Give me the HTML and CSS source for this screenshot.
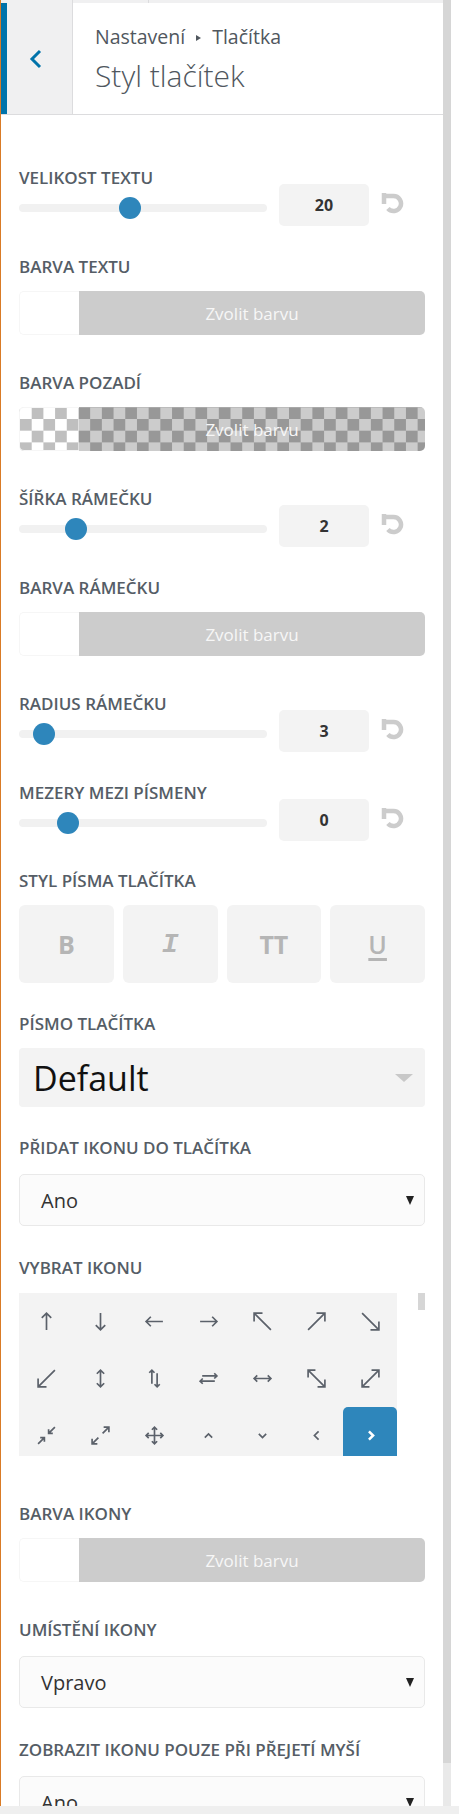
FILE: index.html
```html
<!DOCTYPE html>
<html lang="cs">
<head>
<meta charset="utf-8">
<title>Styl tlačítek</title>
<link rel="stylesheet" href="styles.css">
</head>
<body>
<div class="frame">
  <div class="main">
    <div class="panel">
      <div class="tabs"><span class="tab tab-a"></span><span class="tab tab-b"></span></div>
      <div class="header">
        <div class="back">
          <svg width="14" height="20" viewBox="0 0 14 20"><path d="M11 2 L3 10 L11 18" fill="none" stroke="#0073aa" stroke-width="3"/></svg>
        </div>
        <div class="titles">
          <div class="crumb">Nastavení<span class="crumb-arrow"></span>Tlačítka</div>
          <div class="title">Styl tlačítek</div>
        </div>
      </div>

      <div class="content">
        <div class="control c-slider">
          <div class="label">VELIKOST TEXTU</div>
          <div class="slider-row">
            <div class="track"><span class="thumb" style="left:100px"></span></div>
            <div class="num">20</div>
            <svg class="reset" width="23" height="22" viewBox="0 0 23 22"><path d="M3 1 V12 M1 4 H12.5 A7.5 7.5 0 1 1 6.9 16.5" fill="none" stroke="#cccccc" stroke-width="4.5"/></svg>
          </div>
        </div>

        <div class="control c-picker">
          <div class="label">BARVA TEXTU</div>
          <div class="picker"><span class="swatch"></span><span class="pick-btn">Zvolit barvu</span></div>
        </div>

        <div class="control c-picker">
          <div class="label">BARVA POZADÍ</div>
          <div class="picker checker"><span class="swatch"></span><span class="pick-btn">Zvolit barvu</span></div>
        </div>

        <div class="control c-slider">
          <div class="label">ŠÍŘKA RÁMEČKU</div>
          <div class="slider-row">
            <div class="track"><span class="thumb" style="left:46px"></span></div>
            <div class="num">2</div>
            <svg class="reset" width="23" height="22" viewBox="0 0 23 22"><path d="M3 1 V12 M1 4 H12.5 A7.5 7.5 0 1 1 6.9 16.5" fill="none" stroke="#cccccc" stroke-width="4.5"/></svg>
          </div>
        </div>

        <div class="control c-picker">
          <div class="label">BARVA RÁMEČKU</div>
          <div class="picker"><span class="swatch"></span><span class="pick-btn">Zvolit barvu</span></div>
        </div>

        <div class="control c-slider">
          <div class="label">RADIUS RÁMEČKU</div>
          <div class="slider-row">
            <div class="track"><span class="thumb" style="left:14px"></span></div>
            <div class="num">3</div>
            <svg class="reset" width="23" height="22" viewBox="0 0 23 22"><path d="M3 1 V12 M1 4 H12.5 A7.5 7.5 0 1 1 6.9 16.5" fill="none" stroke="#cccccc" stroke-width="4.5"/></svg>
          </div>
        </div>

        <div class="control c-slider c-tight">
          <div class="label">MEZERY MEZI PÍSMENY</div>
          <div class="slider-row">
            <div class="track"><span class="thumb" style="left:38px"></span></div>
            <div class="num">0</div>
            <svg class="reset" width="23" height="22" viewBox="0 0 23 22"><path d="M3 1 V12 M1 4 H12.5 A7.5 7.5 0 1 1 6.9 16.5" fill="none" stroke="#cccccc" stroke-width="4.5"/></svg>
          </div>
        </div>

        <div class="control">
          <div class="label">STYL PÍSMA TLAČÍTKA</div>
          <div class="styles">
            <div class="sbtn">B</div>
            <div class="sbtn sbtn-i">I</div>
            <div class="sbtn">TT</div>
            <div class="sbtn sbtn-u">U</div>
          </div>
        </div>

        <div class="control">
          <div class="label">PÍSMO TLAČÍTKA</div>
          <div class="fontsel"><span>Default</span><span class="caret-light"></span></div>
        </div>

        <div class="control c-select">
          <div class="label">PŘIDAT IKONU DO TLAČÍTKA</div>
          <div class="select"><span>Ano</span><span class="caret"></span></div>
        </div>

        <div class="control c-icons">
          <div class="label">VYBRAT IKONU</div>
          <div class="iconbox">
            <div class="grid">
              <div class="cell"><svg viewBox="0 0 20 20"><path d="M10 2 V18 M5.5 6.5 L10 2 L14.5 6.5"/></svg></div>
              <div class="cell"><svg viewBox="0 0 20 20"><path d="M10 2 V18 M5.5 13.5 L10 18 L14.5 13.5"/></svg></div>
              <div class="cell"><svg viewBox="0 0 20 20"><path d="M2 10 H18 M6.5 5.5 L2 10 L6.5 14.5"/></svg></div>
              <div class="cell"><svg viewBox="0 0 20 20"><path d="M2 10 H18 M13.5 5.5 L18 10 L13.5 14.5"/></svg></div>
              <div class="cell"><svg viewBox="0 0 20 20"><path d="M2 2 L18 18 M2 10 V2 H10"/></svg></div>
              <div class="cell"><svg viewBox="0 0 20 20"><path d="M2 18 L18 2 M10 2 H18 V10"/></svg></div>
              <div class="cell"><svg viewBox="0 0 20 20"><path d="M2 2 L18 18 M18 10 V18 H10"/></svg></div>

              <div class="cell"><svg viewBox="0 0 20 20"><path d="M18 2 L2 18 M2 10 V18 H10"/></svg></div>
              <div class="cell"><svg viewBox="0 0 20 20"><path d="M10 2 V18 M6.5 5.5 L10 2 L13.5 5.5 M6.5 14.5 L10 18 L13.5 14.5"/></svg></div>
              <div class="cell"><svg viewBox="0 0 20 20"><path d="M7.5 2 V15 M5 4.5 L7.5 2 L10 4.5 M12.5 5 V18 M10 15.5 L12.5 18 L15 15.5"/></svg></div>
              <div class="cell"><svg viewBox="0 0 20 20"><path d="M4 7.5 H18 M15.5 5 L18 7.5 L15.5 10 M16 12.5 H2 M4.5 10 L2 12.5 L4.5 15"/></svg></div>
              <div class="cell"><svg viewBox="0 0 20 20"><path d="M2 10 H18 M5 7 L2 10 L5 13 M15 7 L18 10 L15 13"/></svg></div>
              <div class="cell"><svg viewBox="0 0 20 20"><path d="M2 2 L18 18 M2 9 V2 H9 M18 11 V18 H11"/></svg></div>
              <div class="cell"><svg viewBox="0 0 20 20"><path d="M18 2 L2 18 M11 2 H18 V9 M2 11 V18 H9"/></svg></div>

              <div class="cell"><svg viewBox="0 0 20 20"><path d="M2 18 L8 12 M4 12 H8 V16 M18 2 L12 8 M12 4 V8 H16"/></svg></div>
              <div class="cell"><svg viewBox="0 0 20 20"><path d="M8 12 L2 18 M2 13 V18 H7 M12 8 L18 2 M13 2 H18 V7"/></svg></div>
              <div class="cell"><svg viewBox="0 0 20 20"><path d="M10 2 V18 M2 10 H18 M7.5 4.5 L10 2 L12.5 4.5 M7.5 15.5 L10 18 L12.5 15.5 M4.5 7.5 L2 10 L4.5 12.5 M15.5 7.5 L18 10 L15.5 12.5"/></svg></div>
              <div class="cell"><svg viewBox="0 0 20 20"><path d="M6.5 12 L10 8.5 L13.5 12"/></svg></div>
              <div class="cell"><svg viewBox="0 0 20 20"><path d="M6.5 8.5 L10 12 L13.5 8.5"/></svg></div>
              <div class="cell"><svg viewBox="0 0 20 20"><path d="M12 6 L8 10 L12 14"/></svg></div>
              <div class="cell sel"><svg viewBox="0 0 20 20"><path d="M8.5 6 L12.5 10 L8.5 14"/></svg></div>
            </div>
            <div class="gscroll"></div>
          </div>
        </div>

        <div class="control c-picker">
          <div class="label">BARVA IKONY</div>
          <div class="picker"><span class="swatch"></span><span class="pick-btn">Zvolit barvu</span></div>
        </div>

        <div class="control c-select">
          <div class="label">UMÍSTĚNÍ IKONY</div>
          <div class="select"><span>Vpravo</span><span class="caret"></span></div>
        </div>

        <div class="control c-select">
          <div class="label">ZOBRAZIT IKONU POUZE PŘI PŘEJETÍ MYŠÍ</div>
          <div class="select"><span>Ano</span><span class="caret"></span></div>
        </div>
      </div>
    </div>
    <div class="scrollbar"><div class="sb-thumb"></div><div class="sb-track"></div></div>
    <div class="gutter"></div>
  </div>
  <div class="bottombar"></div>
</div>
</body>
</html>
```

FILE: styles.css
```css
html, body {
  margin: 0;
  padding: 0;
  background: #ffffff;
}

body {
  font-family: "Open Sans", "Liberation Sans", sans-serif;
  color: #50575e;
}

.frame {
  width: 459px;
  height: 1814px;
  display: flex;
  flex-direction: column;
  overflow: hidden;
}

.main {
  display: flex;
  height: 1806px;
}

.panel {
  width: 442px;
  border-left: 1px solid #d97b26;
  display: flex;
  flex-direction: column;
  overflow: hidden;
}

.scrollbar {
  width: 8px;
  display: flex;
  flex-direction: column;
}

.sb-thumb {
  height: 1763px;
  background: #d6d6d6;
}

.sb-track {
  flex: 1;
  background: #e9e9e9;
}

.gutter {
  flex: 1;
  background: #ffffff;
}

.bottombar {
  height: 8px;
  background: #efefef;
}

/* top tabs strip */
.tabs {
  height: 3px;
  background: #f0f0f1;
  display: flex;
  flex-shrink: 0;
}

.tab {
  border-right: 1px solid #dcdcde;
}

.tab-a { width: 71px; }
.tab-b { width: 75px; }

/* header */
.header {
  display: flex;
  height: 111px;
  border-bottom: 1px solid #dcdcde;
  flex-shrink: 0;
}

.back {
  width: 43px;
  padding-left: 22px;
  background: #f0f0f1;
  border-left: 6px solid #0073aa;
  border-right: 1px solid #dcdcde;
  display: flex;
  align-items: center;
}

.titles {
  padding: 21px 0 0 22px;
}

.crumb {
  font-size: 19.5px;
  line-height: 26px;
  color: #50575e;
}

.crumb-arrow {
  display: inline-block;
  width: 0;
  height: 0;
  border-left: 5px solid #50575e;
  border-top: 3.5px solid transparent;
  border-bottom: 3.5px solid transparent;
  margin: 0 11px 0 11px;
  vertical-align: 3px;
}

.title {
  margin-top: 6px;
  font-size: 30px;
  font-weight: 300;
  line-height: 40px;
  color: #50575e;
}

/* content */
.content {
  padding: 54px 18px 0 18px;
}

.control {
  margin-bottom: 32px;
}

.control.c-picker {
  margin-bottom: 39px;
}

.control.c-select {
  margin-bottom: 33px;
}

.control.c-icons {
  margin-bottom: 49px;
}

.control.c-tight {
  margin-bottom: 31px;
}

.label {
  font-size: 17px;
  font-weight: 600;
  line-height: 18px;
  color: #555d66;
  margin-bottom: 15px;
  white-space: nowrap;
}

.c-slider .label {
  margin-bottom: 0;
}

.c-select .label {
  margin-bottom: 17px;
}

.c-icons .label {
  margin-bottom: 16px;
}

/* slider */
.slider-row {
  display: flex;
  align-items: center;
  margin-top: -3px;
}

.track {
  position: relative;
  width: 248px;
  height: 8px;
  margin-top: 6px;
  background: #f1f1f1;
  border-radius: 4px;
}

.thumb {
  position: absolute;
  top: -7px;
  width: 22px;
  height: 22px;
  border-radius: 50%;
  background: #2e86bb;
}

.num {
  margin-left: 12px;
  width: 90px;
  height: 42px;
  background: #f3f3f3;
  border-radius: 5px;
  display: flex;
  align-items: center;
  justify-content: center;
  font-size: 16px;
  font-weight: 700;
  color: #333333;
}

.reset {
  margin-left: 12px;
  margin-top: -4px;
}

/* color picker */
.picker {
  display: flex;
  height: 44px;
  border-radius: 5px;
}

.picker.checker {
  background: repeating-conic-gradient(#bfbfbf 0 25%, #ffffff 0 50%) 1px 0.3px / 23.4px 23.4px;
}

.swatch {
  width: 60px;
  box-sizing: border-box;
  border: 1px solid #f6f6f6;
  border-right: 0;
  border-radius: 5px 0 0 5px;
}

.pick-btn {
  flex: 1;
  display: flex;
  align-items: center;
  justify-content: center;
  background: rgba(0, 0, 0, 0.2);
  border-radius: 0 5px 5px 0;
  color: #f7f7f7;
  font-size: 17px;
}

/* font style buttons */
.styles {
  display: grid;
  grid-template-columns: repeat(4, 1fr);
  gap: 9px;
}

.sbtn {
  height: 78px;
  background: #f3f3f3;
  border-radius: 6px;
  display: flex;
  align-items: center;
  justify-content: center;
  font-size: 25px;
  font-weight: 700;
  color: #b5b5b5;
}

.sbtn-i {
  font-family: "Liberation Mono", monospace;
  font-style: italic;
  font-weight: 700;
  font-size: 28px;
}

.sbtn-u {
  font-weight: 600;
  text-decoration: underline;
  text-decoration-thickness: 3px;
  text-underline-offset: 4px;
}

/* font select */
.fontsel {
  height: 59px;
  background: #f3f3f3;
  border-radius: 4px;
  display: flex;
  align-items: center;
  justify-content: space-between;
  padding: 0 12px 0 14px;
  font-size: 34px;
  color: #111111;
}

.caret-light {
  width: 0;
  height: 0;
  border-top: 8px solid #c8c8c8;
  border-left: 9px solid transparent;
  border-right: 9px solid transparent;
}

/* select */
.select {
  height: 52px;
  box-sizing: border-box;
  border: 1px solid #e9e9e9;
  background: #fbfbfb;
  border-radius: 5px;
  display: flex;
  align-items: center;
  justify-content: space-between;
  padding: 0 10px 0 21px;
  font-size: 20px;
  color: #333333;
}

.caret {
  width: 0;
  height: 0;
  border-top: 9px solid #222222;
  border-left: 4px solid transparent;
  border-right: 4px solid transparent;
}

/* icon picker */
.iconbox {
  display: flex;
  height: 163px;
}

.grid {
  width: 378px;
  background: #f3f3f3;
  display: grid;
  grid-template-columns: repeat(7, 54px);
  grid-auto-rows: 57px;
  overflow: hidden;
}

.cell {
  display: flex;
  align-items: center;
  justify-content: center;
}

.cell svg {
  width: 21px;
  height: 21px;
  fill: none;
  stroke: #5b616a;
  stroke-width: 1.6;
}

.cell.sel {
  background: #2e86bb;
  border-radius: 5px;
}

.cell.sel svg {
  stroke: #ffffff;
  stroke-width: 2.4;
}

.gscroll {
  margin-left: 21px;
  width: 7px;
  height: 17px;
  background: #d6d6d6;
}
```
